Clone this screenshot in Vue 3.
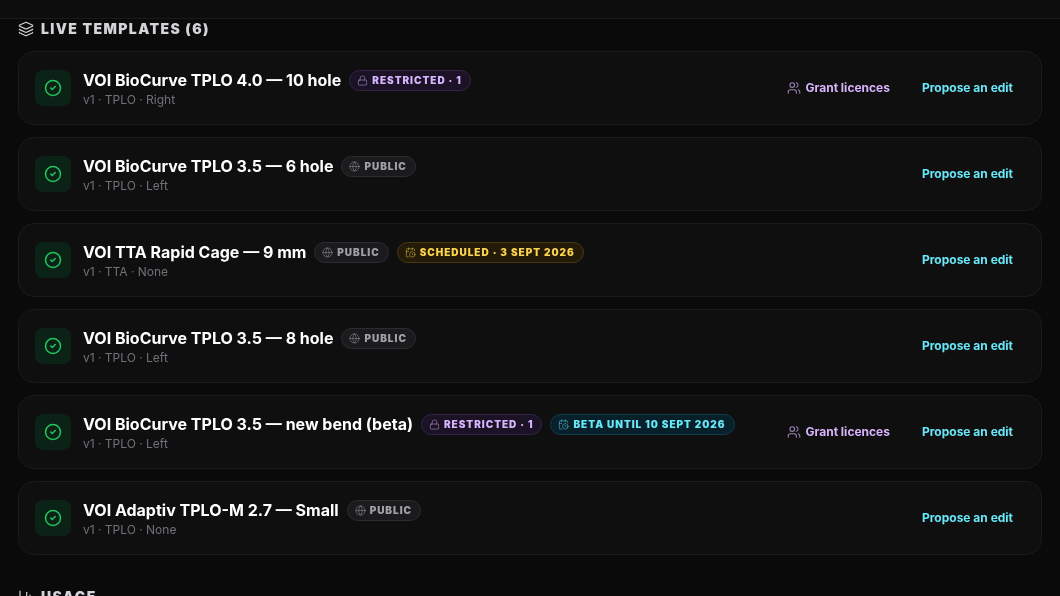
<script setup>
const templates = [
  { name: 'VOI BioCurve TPLO 4.0 — 10 hole', meta: 'v1 · TPLO · Right', badges: [{ t: 'RESTRICTED · 1', k: 'restricted', i: 'lock' }], grant: true },
  { name: 'VOI BioCurve TPLO 3.5 — 6 hole', meta: 'v1 · TPLO · Left', badges: [{ t: 'PUBLIC', k: 'public', i: 'globe' }] },
  { name: 'VOI TTA Rapid Cage — 9 mm', meta: 'v1 · TTA · None', badges: [{ t: 'PUBLIC', k: 'public', i: 'globe' }, { t: 'SCHEDULED · 3 SEPT 2026', k: 'scheduled', i: 'cal' }] },
  { name: 'VOI BioCurve TPLO 3.5 — 8 hole', meta: 'v1 · TPLO · Left', badges: [{ t: 'PUBLIC', k: 'public', i: 'globe' }] },
  { name: 'VOI BioCurve TPLO 3.5 — new bend (beta)', meta: 'v1 · TPLO · Left', badges: [{ t: 'RESTRICTED · 1', k: 'restricted', i: 'lock' }, { t: 'BETA UNTIL 10 SEPT 2026', k: 'beta', i: 'cal' }], grant: true },
  { name: 'VOI Adaptiv TPLO-M 2.7 — Small', meta: 'v1 · TPLO · None', badges: [{ t: 'PUBLIC', k: 'public', i: 'globe' }] }
]
</script>

<template>
  <div class="page">
    <div class="topbar"></div>
    <main class="content">
      <h2 class="heading">
        <svg class="head-icon" viewBox="0 0 24 24"><path d="M12.83 2.18a2 2 0 0 0-1.66 0L2.6 6.08a1 1 0 0 0 0 1.83l8.58 3.91a2 2 0 0 0 1.66 0l8.58-3.9a1 1 0 0 0 0-1.83z"/><path d="M2 12a1 1 0 0 0 .58.91l8.6 3.91a2 2 0 0 0 1.65 0l8.58-3.9A1 1 0 0 0 22 12"/><path d="M2 17a1 1 0 0 0 .58.91l8.6 3.91a2 2 0 0 0 1.65 0l8.58-3.9A1 1 0 0 0 22 17"/></svg>
        LIVE TEMPLATES (6)
      </h2>
      <div class="list">
        <article v-for="tpl in templates" :key="tpl.name" class="card">
          <div class="status">
            <svg viewBox="0 0 24 24"><circle cx="12" cy="12" r="10"/><path d="m9 12 2 2 4-4"/></svg>
          </div>
          <div class="info">
            <div class="title-row">
              <span class="title">{{ tpl.name }}</span>
              <span v-for="b in tpl.badges" :key="b.t" class="badge" :class="b.k">
                <svg v-if="b.i === 'lock'" viewBox="0 0 24 24"><rect x="3" y="11" width="18" height="11" rx="2"/><path d="M7 11V7a5 5 0 0 1 10 0v4"/></svg>
                <svg v-else-if="b.i === 'globe'" viewBox="0 0 24 24"><circle cx="12" cy="12" r="10"/><path d="M12 2a14.5 14.5 0 0 0 0 20 14.5 14.5 0 0 0 0-20"/><path d="M2 12h20"/></svg>
                <svg v-else viewBox="0 0 24 24"><path d="M16 14v2.2l1.6 1"/><path d="M16 2v4"/><path d="M21 7.5V6a2 2 0 0 0-2-2H5a2 2 0 0 0-2 2v14a2 2 0 0 0 2 2h3.5"/><path d="M3 10h5"/><path d="M8 2v4"/><circle cx="16" cy="16" r="6"/></svg>
                {{ b.t }}
              </span>
            </div>
            <div class="meta">{{ tpl.meta }}</div>
          </div>
          <div class="actions">
            <button v-if="tpl.grant" class="action grant">
              <svg viewBox="0 0 24 24"><path d="M16 21v-2a4 4 0 0 0-4-4H6a4 4 0 0 0-4 4v2"/><circle cx="9" cy="7" r="4"/><path d="M22 21v-2a4 4 0 0 0-3-3.87"/><path d="M16 3.13a4 4 0 0 1 0 7.75"/></svg>
              Grant licences
            </button>
            <button class="action propose">Propose an edit</button>
          </div>
        </article>
      </div>
      <h2 class="heading usage">
        <svg class="head-icon" viewBox="0 0 24 24"><path d="M3 3v16a2 2 0 0 0 2 2h16"/><path d="M18 17V9"/><path d="M13 17V5"/><path d="M8 17v-3"/></svg>
        USAGE
      </h2>
    </main>
  </div>
</template>

<style scoped>
.page {
  height: 596px;
  overflow: hidden;
  background: #0a0a0a;
  font-family: Inter, "Liberation Sans", sans-serif;
  will-change: transform;
}
.topbar {
  height: 18px;
  background: #0d0d0e;
  border-bottom: 1px solid #1a1a1c;
}
.content {
  padding: 0 18px;
}
.heading {
  display: flex;
  align-items: center;
  gap: 7px;
  height: 20px;
  margin: 0 0 12px;
  font-size: 14px;
  font-weight: 900;
  letter-spacing: 1.4px;
  line-height: 20px;
  color: #d4d4d8;
}
.head-icon {
  width: 16px;
  height: 16px;
  fill: none;
  stroke: #d4d4d8;
  stroke-width: 1.75;
  stroke-linecap: round;
  stroke-linejoin: round;
}
.usage {
  margin-top: 32px;
}
.list {
  display: flex;
  flex-direction: column;
  gap: 12px;
}
.card {
  box-sizing: border-box;
  height: 74px;
  display: flex;
  align-items: center;
  gap: 12px;
  padding: 0 16px;
  background: #0f0f10;
  border: 1px solid #1b1b1d;
  border-radius: 16px;
}
.status {
  flex: none;
  width: 36px;
  height: 36px;
  display: flex;
  align-items: center;
  justify-content: center;
  border-radius: 8px;
  background: #0b2316;
}
.status svg {
  width: 18px;
  height: 18px;
  fill: none;
  stroke: #22c55e;
  stroke-width: 2;
  stroke-linecap: round;
  stroke-linejoin: round;
}
.info {
  flex: 1;
  min-width: 0;
}
.title-row {
  display: flex;
  align-items: center;
  gap: 8px;
  height: 22px;
}
.title {
  font-size: 16px;
  font-weight: 700;
  line-height: 22px;
  color: #fff;
  white-space: nowrap;
}
.meta {
  margin-top: 1px;
  font-size: 12px;
  line-height: 16px;
  color: #71717a;
}
.badge {
  display: inline-flex;
  align-items: center;
  gap: 4px;
  height: 21px;
  margin-top: 1px;
  box-sizing: border-box;
  padding: 0 8px 0 7px;
  border: 1px solid;
  border-radius: 999px;
  font-size: 10px;
  font-weight: 900;
  letter-spacing: 0.975px;
  white-space: nowrap;
}
.badge svg {
  width: 11px;
  height: 11px;
  flex: none;
  fill: none;
  stroke: currentColor;
  stroke-opacity: 0.5;
  stroke-width: 2;
  stroke-linecap: round;
  stroke-linejoin: round;
}
.restricted {
  color: #d8b4fe;
  background: #1b1225;
  border-color: #35244a;
}
.public {
  color: #a1a1aa;
  background: #1b1b1e;
  border-color: #2d2d31;
}
.scheduled {
  color: #fcd34d;
  background: #231a08;
  border-color: #4a3810;
}
.beta {
  color: #67e8f9;
  background: #08202a;
  border-color: #0f3d49;
}
.actions {
  flex: none;
  display: flex;
  align-items: center;
  gap: 8px;
}
.action {
  display: inline-flex;
  align-items: center;
  gap: 4px;
  padding: 6px 12px;
  border: 0;
  background: none;
  font-family: inherit;
  font-size: 12px;
  font-weight: 700;
  line-height: 16px;
  white-space: nowrap;
}
.action svg {
  width: 14px;
  height: 14px;
  fill: none;
  stroke: currentColor;
  stroke-opacity: 0.7;
  stroke-width: 1.75;
  stroke-linecap: round;
  stroke-linejoin: round;
}
.grant {
  color: #d8b4fe;
}
.propose {
  color: #67e8f9;
}
</style>
